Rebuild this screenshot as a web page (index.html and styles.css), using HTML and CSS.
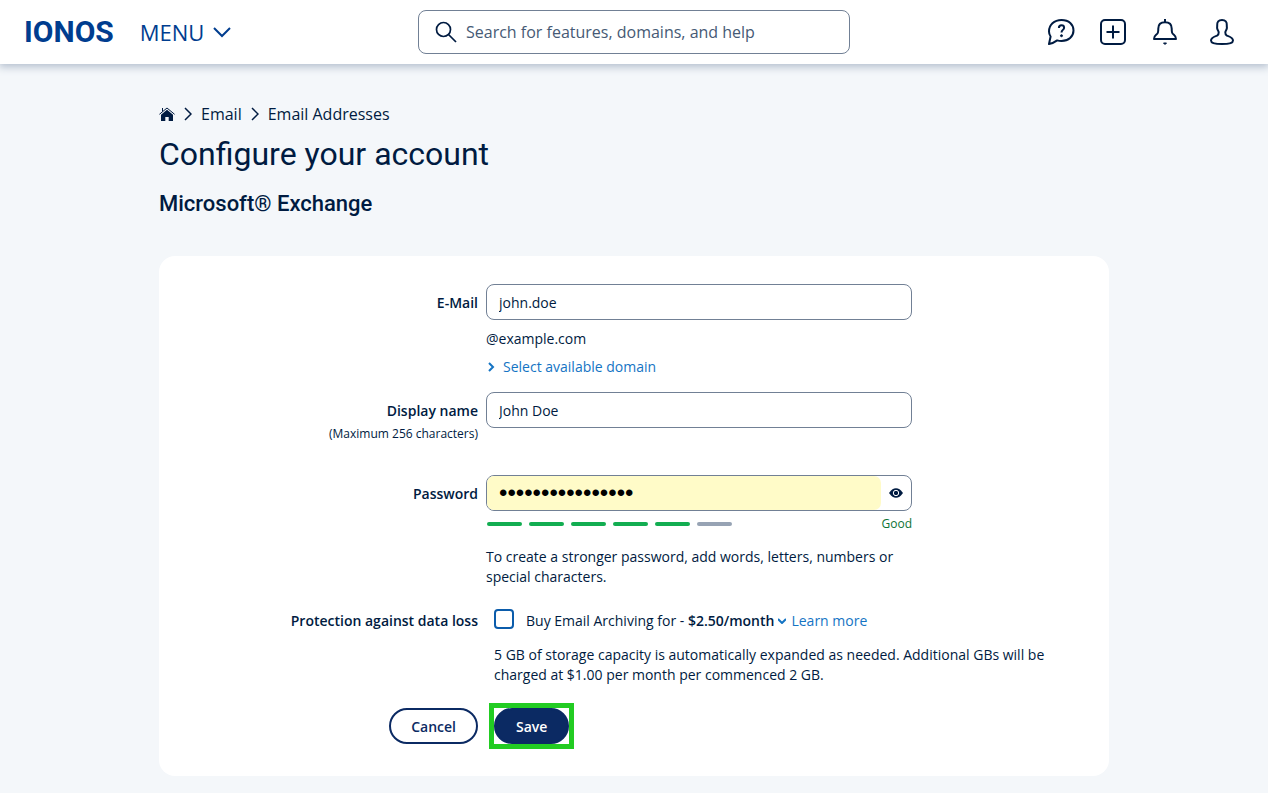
FILE: index.html
```html
<!DOCTYPE html>
<html lang="en">
<head>
<meta charset="utf-8">
<meta name="viewport" content="width=device-width, initial-scale=1">
<title>Configure your account</title>
<link rel="stylesheet" href="styles.css">
</head>
<body>
<header class="topbar">
  <div class="brand">
    <a class="logo" href="#">IONOS</a>
    <button class="menu" type="button">MENU
      <svg width="20" height="12" viewBox="0 0 20 12" aria-hidden="true"><path d="M2 2l8 8 8-8"/></svg>
    </button>
  </div>
  <form class="search" role="search">
    <svg width="22" height="22" viewBox="0 0 22 22" aria-hidden="true"><circle cx="8.500" cy="8.500" r="7"/><path d="M13.500 13.500l7.500 7.500"/></svg>
    <input type="search" aria-label="Search" placeholder="Search for features, domains, and help">
  </form>
  <div class="actions">
    <button type="button" aria-label="Help">
      <svg width="28" height="28" viewBox="0 0 28 28"><path d="M2 26l1.600-7.500C2.500 17 2 15.400 2 13.500 2 7 7 2 14.500 2S26.500 6.500 26.500 12.500 21.500 23 14.500 23c-1.500 0-3-.2-4.300-.6C8 24 5 25.500 2 26z"/><path class="mark" d="M11.900 10c0-1.700 1-2.700 2.600-2.700s2.600.9 2.600 2.400c0 2.200-2.600 2.200-2.600 4.700"/><circle class="dot" cx="14.500" cy="17.700" r="1"/></svg>
    </button>
    <button type="button" aria-label="Create">
      <svg width="28" height="28" viewBox="0 0 28 28"><rect x="2" y="2" width="24" height="24" rx="4"/><path d="M14 7.500v13M7.500 14h13"/></svg>
    </button>
    <button type="button" aria-label="Notifications">
      <svg width="28" height="28" viewBox="0 0 28 28"><path d="M14 4.200V1M14 4.200c-4.300 0-6.700 2.600-6.700 6.300 0 4.300-.4 4.900-2.200 6.300C3.400 18.200 3 19.500 3 21h22c0-1.500-.4-2.800-2.100-4.200-1.800-1.400-2.200-2-2.200-6.300 0-3.700-2.400-6.300-6.700-6.300z"/><path d="M12.500 25h3L14 26.500z" class="dot"/></svg>
    </button>
    <button class="profile" type="button" aria-label="Profile">
      <svg width="28" height="28" viewBox="0 0 28 28"><path d="M14 2c-3.500 0-5 1.800-4.800 5.200.1 1.600-.3 1.900 0 3.300.3 1.700 1.400 2.300 1.500 3.800.1 1.400-.2 2.400-1.600 3.300C6 18.700 3 19.500 3 22.400 3 25 8 26 14 26s11-1 11-3.600c0-2.900-3-3.700-6.100-4.800-1.400-.9-1.700-1.900-1.600-3.300.1-1.500 1.200-2.100 1.500-3.800.3-1.400-.1-1.700 0-3.300C19 3.800 17.500 2 14 2z"/></svg>
    </button>
  </div>
</header>

<main class="page">
  <nav class="crumbs" aria-label="Breadcrumb">
    <a href="#" aria-label="Home"><svg width="16" height="14" viewBox="0 0 16 14"><path class="fill" d="M8 2.800l6 5V14H9.700v-4H6.300v4H2V7.800z"/><path class="roof" d="M.4 7.300L8 1l7.600 6.300M3.500 4.500V1"/></svg></a>
    <svg class="sep" width="8" height="14" viewBox="0 0 8 14" aria-hidden="true"><path d="M1 1l6 6-6 6"/></svg>
    <a href="#">Email</a>
    <svg class="sep" width="8" height="14" viewBox="0 0 8 14" aria-hidden="true"><path d="M1 1l6 6-6 6"/></svg>
    <a href="#">Email Addresses</a>
  </nav>
  <h1>Configure your account</h1>
  <h2>Microsoft® Exchange</h2>

  <form class="card">
    <div class="row">
      <div class="name"><label for="email">E-Mail</label></div>
      <div class="field">
        <input class="text" id="email" type="text" value="john.doe">
        <p class="domain">@example.com</p>
        <a class="link select" href="#"><svg width="7" height="10" viewBox="0 0 7 10" aria-hidden="true"><path d="M1 1l4 4-4 4"/></svg>Select available domain</a>
      </div>
    </div>

    <div class="row display">
      <div class="name"><label for="display">Display name</label><small>(Maximum 256 characters)</small></div>
      <div class="field"><input class="text" id="display" type="text" value="John Doe"></div>
    </div>

    <div class="row password">
      <div class="name"><label for="password">Password</label></div>
      <div class="field">
        <div class="secret">
          <input id="password" type="password" value="examplepassword1">
          <button type="button" aria-label="Show password"><svg width="14" height="10" viewBox="0 0 14 10"><path d="M0 5C2.500 1.500 4.500.3 7 .3S11.500 1.500 14 5C11.500 8.500 9.500 9.700 7 9.700S2.500 8.500 0 5z"/><circle cx="7" cy="5" r="2.700"/></svg></button>
        </div>
        <div class="strength">
          <div class="bars"><i class="on"></i><i class="on"></i><i class="on"></i><i class="on"></i><i class="on"></i><i></i></div>
          <span>Good</span>
        </div>
        <p class="hint">To create a stronger password, add words, letters, numbers or special characters.</p>
      </div>
    </div>

    <div class="row archive">
      <div class="name"><span>Protection against data loss</span></div>
      <div class="option">
        <div class="offer">
          <input id="archive" type="checkbox">
          <label for="archive">Buy Email Archiving for - <b>$2.50/month</b></label>
          <a class="link" href="#"><svg width="8" height="6" viewBox="0 0 8 6" aria-hidden="true"><path d="M0 1l4 4 4-4"/></svg>Learn more</a>
        </div>
        <p>5 GB of storage capacity is automatically expanded as needed. Additional GBs will be charged at $1.00 per month per commenced 2 GB.</p>
      </div>
    </div>

    <div class="row buttons">
      <div class="name"><button class="btn" type="button">Cancel</button></div>
      <div class="option"><span class="highlight"><button class="btn primary" type="submit">Save</button></span></div>
    </div>
  </form>
</main>
</body>
</html>
```
FILE: styles.css
```css
* { box-sizing: border-box; }

body {
  margin: 0;
  min-height: 100vh;
  background: #f4f7fa;
  color: #001b41;
  font: 14px/20px "Open Sans", "Noto Sans", sans-serif;
}

button, input { font: inherit; color: inherit; }
button { padding: 0; border: 0; background: none; cursor: pointer; }
a { color: inherit; text-decoration: none; }
p, h1, h2 { margin: 0; }
svg { display: block; flex: none; fill: none; stroke: currentColor; stroke-width: 2; }

/* Top bar */
.topbar {
  display: grid;
  grid-template-columns: 1fr minmax(0, 432px) 1fr;
  align-items: center;
  height: 64px;
  padding: 0 24px;
  background: #fff;
  box-shadow: 0 2px 8px 1px #b4bfce;
}
.brand { display: flex; align-items: center; gap: 26px; color: #003d8f; }
.logo { font: bold 30px/40px Roboto, "Liberation Sans", sans-serif; }
.menu { display: flex; align-items: center; gap: 8px; font-size: 22px; line-height: 32px; }
.search {
  display: flex;
  align-items: center;
  gap: 8px;
  height: 44px;
  padding: 0 16px;
  border: 1px solid #718095;
  border-radius: 8px;
}
.search svg { stroke-width: 1.7; }
.search input { flex: 1; min-width: 0; padding: 0 1px; border: 0; outline: 0; background: none; font-size: 16px; }
.search input::placeholder { color: #465a75; opacity: 1; }
.actions { display: flex; justify-content: flex-end; gap: 24px; padding-right: 8px; }
.actions svg { stroke-linejoin: round; }
.profile { padding-left: 5px; }
.dot { fill: currentColor; stroke-width: 1; }

/* Page heading */
.page { max-width: 950px; margin: 0 auto; padding: 38px 0 16px; }
.crumbs { display: flex; align-items: center; gap: 9px; font-size: 16px; line-height: 24px; }
.crumbs .fill { fill: currentColor; stroke: none; }
.crumbs .roof { stroke-width: 1; }
.sep path { stroke-width: 1.5; }
h1 { margin-top: 8px; font: 400 32px/40px Roboto, sans-serif; }
h2 { margin-top: 16px; font: 500 22px/28px Roboto, sans-serif; }

/* Form card */
.card { margin-top: 38px; padding: 28px 32px 32px; border-radius: 16px; background: #fff; }
.row { display: grid; grid-template-columns: minmax(0, 287px) minmax(0, 1fr); gap: 8px; }
.name { padding-top: 9px; text-align: right; font-weight: 600; }
.name small { display: block; margin-top: 3px; font-size: 12px; font-weight: 400; }
.field { max-width: 426px; }
.text {
  display: block;
  width: 100%;
  height: 36px;
  padding: 0 12px;
  border: 1px solid #718095;
  border-radius: 8px;
  background: #fff;
}
.domain { margin-top: 9px; }
.link { display: inline-flex; align-items: center; color: #1474c4; }
.select { display: flex; gap: 8px; margin-top: 8px; padding-left: 2px; }
.display { margin-top: 15px; }

.password { margin-top: 31px; }
.secret { display: flex; height: 36px; border: 1px solid #718095; border-radius: 8px; }
.secret input {
  flex: 1;
  min-width: 0;
  padding: 0 12px;
  border: 0;
  border-radius: 7px;
  background: #fffbc8;
  color: #000;
  font: 24px/28px "Liberation Sans", sans-serif;
}
.secret button { display: grid; place-items: center; width: 30px; }
.secret svg { fill: #001b41; stroke: none; }
.secret circle { fill: #001b41; stroke: #fff; stroke-width: 1; }
.strength { display: flex; align-items: center; justify-content: space-between; margin-top: 3px; color: #0c7235; font-size: 12px; }
.bars { display: flex; gap: 7px; padding-left: 1px; }
.bars i { width: 35px; height: 4px; border-radius: 2px; background: #97a3b4; }
.bars .on { background: #12ad51; }
.hint { margin-top: 13px; }

.archive { margin-top: 22px; }
.archive .name { padding-top: 2px; }
.option { padding-left: 8px; }
.offer { display: flex; align-items: center; flex-wrap: wrap; }
.offer input {
  width: 20px;
  height: 20px;
  margin: 0 12px 2px 0;
  appearance: none;
  border: 2px solid #0b5cab;
  border-radius: 4px;
  background: #fff;
}
.offer label { margin-right: 4px; padding-top: 2px; }
.offer b { font-weight: 600; }
.offer .link { gap: 5px; padding-top: 2px; }
.option p { margin-top: 14px; }

.buttons { margin-top: 23px; }
.buttons .name { padding: 0; }
.btn { height: 36px; padding: 1px 20px 0; border: 2px solid #0b2a63; border-radius: 18px; color: #0b2a63; font-weight: 600; }
.primary { background: #0b2a63; color: #fff; }
.highlight { display: inline-flex; box-shadow: 0 0 0 5px #22cc22; }
```
